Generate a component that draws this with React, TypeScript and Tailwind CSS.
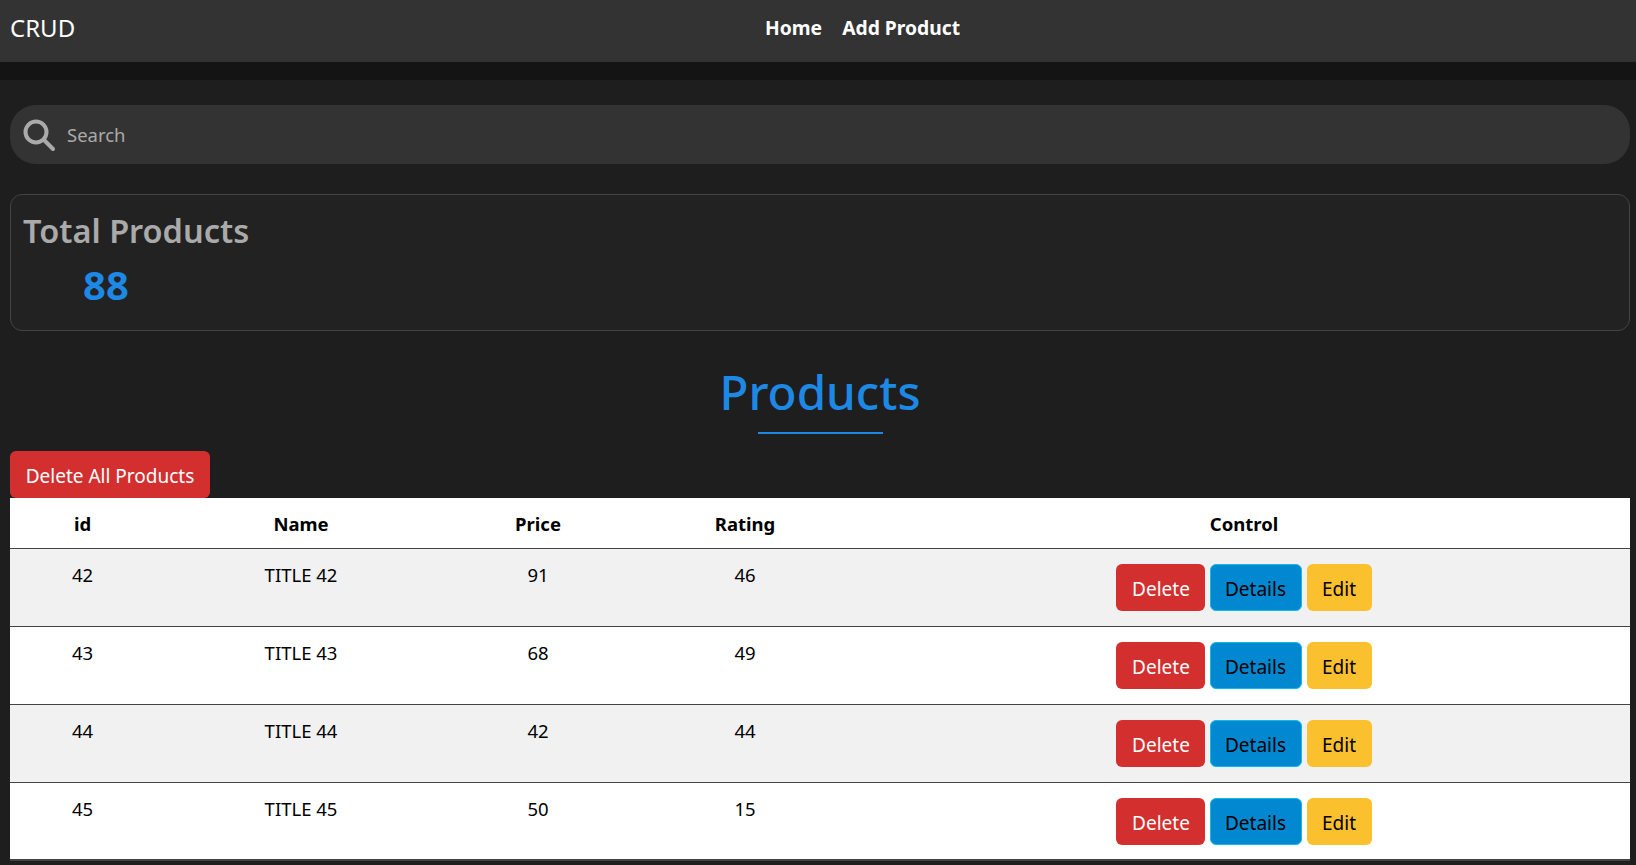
import React from "react";

const products = [
  { id: 42, name: "TITLE 42", price: 91, rating: 46 },
  { id: 43, name: "TITLE 43", price: 68, rating: 49 },
  { id: 44, name: "TITLE 44", price: 42, rating: 44 },
  { id: 45, name: "TITLE 45", price: 50, rating: 15 },
];

const SearchIcon = () => (
  <svg width="34" height="34" viewBox="0 0 34 34" fill="none" stroke="#aaaaaa" strokeWidth="4" strokeLinecap="round">
    <circle cx="14" cy="14" r="10.5" />
    <path d="M22 22 L31 31" />
  </svg>
);

const App = () => {
  return (
    <div className="h-screen overflow-hidden bg-[#1e1e1e] font-['Noto_Sans','Open_Sans',sans-serif]">
      {/* navbar */}
      <header className="relative flex h-[62px] items-start bg-[#333333]">
        <span className="absolute left-[10px] top-[12px] text-[24px] leading-[32px] text-white">CRUD</span>
        <nav className="ml-[765px] mt-[14px] flex gap-[20px] text-[19.3px] leading-[27px] font-bold text-white">
          <a>Home</a>
          <a>Add Product</a>
        </nav>
      </header>
      <div className="h-[18px] bg-[#141414]" />

      <main className="pl-[10px] pr-[6px]">
        {/* search */}
        <div className="mt-[25px] flex h-[59px] items-center gap-[11px] rounded-[26px] bg-[#333333] pl-[12px]">
          <SearchIcon />
          <span className="text-[18.5px] text-[#aaaaaa]">Search</span>
        </div>

        {/* total */}
        <section className="mt-[30px] h-[137px] rounded-[12px] border border-[#444444] bg-[#222222] pl-[12px] pt-[14px]">
          <h2 className="text-[32.5px] leading-[44px] font-semibold text-[#aaaaaa]">Total Products</h2>
          <p className="mt-[7px] pl-[60px] text-[40px] leading-[50px] font-bold text-[#1e88e5]">88</p>
        </section>

        {/* title */}
        <div className="mt-[28px] flex flex-col items-center">
          <h1 className="text-[47.5px] leading-[66px] font-medium text-[#1e88e5]">Products</h1>
          <div className="mt-[7px] h-[2px] w-[125px] bg-[#1e88e5]" />
        </div>

        <button className="mt-[17px] block h-[47px] w-[200px] rounded-[6px] bg-[#d32f2f] pt-[3px] text-[19px] text-white">
          Delete All Products
        </button>

        {/* table */}
        <table className="w-full table-fixed border-collapse bg-white text-[18.5px] text-black">
          <colgroup>
            <col className="w-[145px]" />
            <col className="w-[292px]" />
            <col className="w-[182px]" />
            <col className="w-[232px]" />
            <col />
          </colgroup>
          <thead>
            <tr className="h-[50px] border-b border-[#444444]">
              <th className="pt-[3px] font-bold">id</th>
              <th className="pt-[3px] font-bold">Name</th>
              <th className="pt-[3px] font-bold">Price</th>
              <th className="pt-[3px] font-bold">Rating</th>
              <th className="pt-[3px] pr-[3px] font-bold">Control</th>
            </tr>
          </thead>
          <tbody>
            {products.map((p, i) => (
              <tr key={p.id} className={`h-[78px] border-b border-[#444444] last:border-b-2 ${i % 2 === 0 ? "bg-[#f1f1f1]" : "bg-white"}`}>
                <td className="pt-[13px] align-top text-center leading-[25px]">{p.id}</td>
                <td className="pt-[13px] align-top text-center leading-[25px]">{p.name}</td>
                <td className="pt-[13px] align-top text-center leading-[25px]">{p.price}</td>
                <td className="pt-[13px] align-top text-center leading-[25px]">{p.rating}</td>
                <td className="pt-[15px] pr-[4px] align-top">
                  <div className="flex justify-center gap-[5px] text-[19px]">
                    <button className="h-[47px] w-[89px] rounded-[6px] bg-[#d32f2f] pt-[5px] pl-[2px] text-white">Delete</button>
                    <button className="h-[47px] w-[92px] rounded-[6px] border border-[#0dbbe8] bg-[#0288d1] pt-[5px] text-black">Details</button>
                    <button className="h-[47px] w-[65px] rounded-[6px] bg-[#fbc02d] pt-[5px] text-black">Edit</button>
                  </div>
                </td>
              </tr>
            ))}
          </tbody>
        </table>
      </main>
    </div>
  );
};

export default App;
